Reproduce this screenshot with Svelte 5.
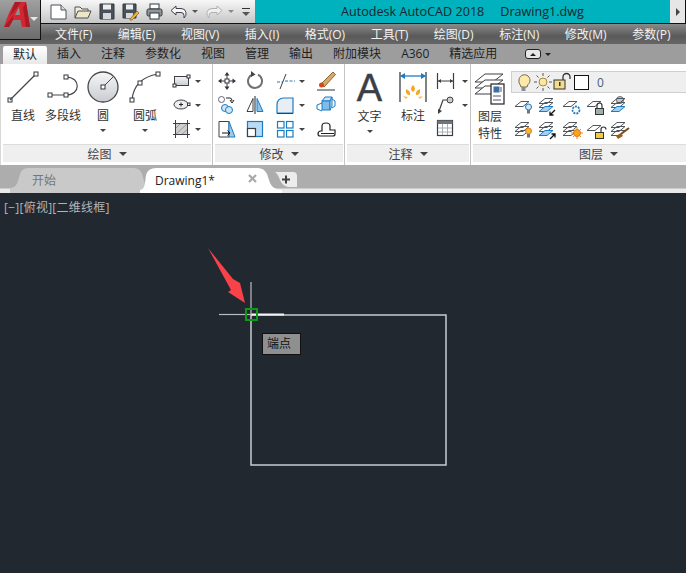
<script>
  const menus = ['文件(F)', '编辑(E)', '视图(V)', '插入(I)', '格式(O)', '工具(T)', '绘图(D)', '标注(N)', '修改(M)', '参数(P)'];
  const tabs = ['默认', '插入', '注释', '参数化', '视图', '管理', '输出', '附加模块', 'A360', '精选应用'];

  const ln = '#3c4046';
  const bl = '#1b7cc4';
  const sq = (x, y) => `<rect x="${x - 2}" y="${y - 2}" width="4" height="4" fill="#fff" stroke="#33373c"/>`;
  const sheet = (y, fill = 'none', c = '#50565c') => `<path d="M3 ${y + 5.5}L9 ${y + .5}H17L11 ${y + 5.5}Z" fill="${fill}" stroke="${c}"/>`;
  const stack = (fill = 'none') => sheet(4) + sheet(8) + sheet(12, fill, fill === 'none' ? '#50565c' : bl);
  const bulb = (c, s) => `<circle cx="16.500" cy="13" r="3" fill="${c}" stroke="${s}"/><rect x="15" y="16" width="3" height="3.500" fill="#6f757b"/>`;
  const lock = (c, open) => `<rect x="11.500" y="14.500" width="8" height="6" fill="${c}" stroke="#333"/><path d="M${open ? '17 14V11.500a2.500 2.500 0 0 1 5 0' : '13 14V11.500a2.500 2.500 0 0 1 5 0V14'}" fill="none" stroke="#333" stroke-width="1.200"/>`;
  const sunny = `<circle cx="17" cy="15" r="3.500" fill="#f7a51d" stroke="#e2711a"/><path d="M17 9v2M17 19v2M11 15h2M21 15h2M13 11l1.500 1.500M21 11l-1.500 1.500M13 19l1.500-1.500M21 19l-1.500-1.500" stroke="#e98a1c"/>`;

  const icons = {
    line: sq(5, 30) + `<path d="M5 30L31 4" stroke="#44484d" stroke-width="1.200"/>` + sq(31, 4),
    poly: `<path d="M5 25H21C36 25 36 7 21 7" fill="none" stroke="#44484d" stroke-width="1.200"/>` + sq(5, 25) + sq(21, 25) + sq(21, 7),
    circle: `<circle cx="18" cy="17" r="15" fill="url(#disc)" stroke="#44484d" stroke-width="1.300"/><path d="M18 17L28 7" stroke="#44484d"/>` + sq(18, 17),
    arc: `<path d="M5 30Q7 8 31 4" fill="none" stroke="#44484d" stroke-width="1.200"/>` + sq(5, 30) + sq(13, 13) + sq(31, 4),
    rect: `<rect x="7.500" y="7.500" width="14" height="9" fill="url(#disc)" stroke="${ln}"/><rect x="6" y="15" width="3" height="3" fill="#fff" stroke="#333"/><rect x="20" y="6" width="3" height="3" fill="#fff" stroke="#333"/>`,
    ellipse: `<ellipse cx="14" cy="11.500" rx="7" ry="4.500" fill="#eee" stroke="${ln}"/><path d="M14 9.500v4M12 11.500h4" stroke="#222"/><rect x="20.500" y="10" width="2.500" height="2.500" fill="#fff" stroke="#333"/>`,
    hatch: `<rect x="8" y="6" width="13" height="12" fill="#cfcfcf"/><path d="M8 12l6-6M8 18L21 6M14 18l7-6" stroke="#999"/><path d="M8.500 3v18M20.500 3v18M6 6.500h17M6 17.500h17" stroke="${ln}"/>`,
    move: `<path d="M12 5v14M5 12h14" stroke="#33373c"/><path d="M12 3l-2.500 3.500h5zM12 21l-2.500-3.500h5zM3 12l3.500-2.500v5zM21 12l-3.500-2.500v5z" fill="#33373c"/><rect x="10" y="10" width="4" height="4" fill="#fff" stroke="#33373c"/>`,
    rotate: `<path d="M9.500 5.500A7 7 0 1 0 15 5.700" fill="none" stroke="#6d7277" stroke-width="2"/><path d="M8 2l4.500 3.500L8 8z" fill="#444"/>`,
    trim: `<path d="M6 13h6M14 12h11" stroke="${bl}" stroke-dasharray="3 1.500"/><path d="M9 20L15 5" stroke="${ln}"/>`,
    erase: `<path d="M8 15L20 3l2.500 2.500L11 18z" fill="#d7a868" stroke="#8a6a3a"/><circle cx="8.500" cy="16" r="2.500" fill="#d9481c"/><path d="M4 21h18" stroke="#333"/>`,
    copy: `<circle cx="6.500" cy="6.500" r="3" fill="#fff" stroke="#667"/><circle cx="10" cy="15" r="3.500" fill="#cfe6f7" stroke="${bl}"/><circle cx="14" cy="17" r="3.500" fill="#cfe6f7" stroke="${bl}"/><path d="M11 5h4q2 0 2 3M15 7l2 3 2-3" fill="none" stroke="#222"/>`,
    mirror: `<path d="M12 3v18" stroke="#222"/><path d="M10 5.500v13H4z" fill="none" stroke="${ln}"/><path d="M14 5.500v13h6z" fill="#8cc4ea" stroke="${bl}"/>`,
    fillet: `<path d="M6 20V12Q6 5 13 5H22V20Z" fill="#e8eef3" stroke="${bl}" stroke-width="1.200"/><path d="M6 20.500H22" stroke="${ln}"/>`,
    shell: `<path d="M9 8l3-4h7l-2 4z" fill="#cfe6f7" stroke="${bl}"/><rect x="9" y="8" width="8" height="9" fill="#7fbde8" stroke="${bl}"/><path d="M17 8l2-4v9l-2 4z" fill="#cfe6f7" stroke="${bl}"/><path d="M9 10L4 12v4l5 2M19 6l3 2v5l-3 2" fill="none" stroke="${bl}"/>`,
    stretch: `<path d="M4 4.500H14V20H4Z" fill="#fff" stroke="${ln}"/><path d="M14 4.500l6 15.500H14z" fill="#9ccbee" stroke="${bl}"/><path d="M7 16h8M12.500 13.500L15 16l-2.500 2.500" fill="none" stroke="#111"/>`,
    scale: `<rect x="4.500" y="4.500" width="15" height="15" fill="#b9dcf4" stroke="${bl}" stroke-width="1.200"/><rect x="4.500" y="11.500" width="8" height="8" fill="#fff" stroke="${ln}" stroke-width="1.200"/>`,
    array: `<rect x="6.500" y="4.500" width="6.500" height="6.500" fill="#fff" stroke="${bl}" stroke-width="1.200"/><rect x="15.500" y="4.500" width="6.500" height="6.500" fill="#fff" stroke="${bl}" stroke-width="1.200"/><rect x="6.500" y="13.500" width="6.500" height="6.500" fill="#fff" stroke="${bl}" stroke-width="1.200"/><rect x="15.500" y="13.500" width="6.500" height="6.500" fill="#fff" stroke="${bl}" stroke-width="1.200"/>`,
    offset: `<path d="M5 17q0-3 3-3h1V9q0-3 4-3t4 3v4h5v4q0 2-2 2H7q-2 0-2-2z" fill="#fff" stroke="#222" stroke-width="1.200"/><path d="M8 16.500h13" stroke="#222"/>`,
    dim: `<path d="M1 2V32M27 2V32" stroke="${ln}" stroke-width="1.300"/><path d="M2 6H26" stroke="${bl}" stroke-width="1.300"/><path d="M1 6l5-3v6zM27 6l-5-3v6z" fill="${bl}"/><path d="M14 15q4 4 0 7q-4-3 0-7zM7 19q5 2 4 6q-5 0-4-6zM21 19q-5 2-4 6q5 0 4-6z" fill="#f5a623"/><path d="M4 26l5 1-2 2zM24 26l-5 1 2 2z" fill="#f5c15c"/>`,
    hdim: `<path d="M3.500 4V20M19.500 4V20" stroke="${ln}" stroke-width="1.200"/><path d="M3 12H20" stroke="${ln}"/><path d="M4 12l3-2v4zM19 12l-3-2v4z" fill="${ln}"/>`,
    leader: `<circle cx="16" cy="7" r="3" fill="#ccc" stroke="${ln}"/><path d="M13 7H9L5 18" fill="none" stroke="${ln}" stroke-width="1.200"/><path d="M4 21l0-5 4 2z" fill="${ln}"/>`,
    table: `<rect x="3.500" y="3.500" width="15" height="15" fill="#fff" stroke="${ln}" stroke-width="1.200"/><rect x="3.500" y="3.500" width="15" height="3.500" fill="#6f757c"/><path d="M4 11h14M4 15h14M8.500 7v11M13.500 7v11" stroke="#aab0b6"/>`,
    layers: `<path d="M3 12L13 4H31L21 12Z" fill="#fff" stroke="${ln}"/><path d="M3 18L13 10H31L21 18Z" fill="#fff" stroke="${ln}"/><path d="M3 24L13 16H31L21 24Z" fill="#fff" stroke="${ln}"/><rect x="19" y="14" width="13" height="20" fill="#fff" stroke="#222" stroke-width="1.200"/><rect x="21.500" y="16.500" width="6" height="6" fill="#3c6ea8"/><path d="M29 17v5M21 26h8M21 30h8" stroke="#556"/>`,
    bulbOn: `<path d="M5 8a5.500 5.500 0 1 1 9 4.500L13 15H7L6 12.500A5.500 5.500 0 0 1 5 8z" fill="#ffe9a8" stroke="#6e6a55"/><rect x="7.500" y="15" width="4" height="4" fill="#8a8f96"/>`,
    sunOn: `<circle cx="10" cy="10" r="4" fill="#fbe6a2" stroke="#a58a3c"/><path d="M10 1v3M10 16v3M1 10h3M16 10h3M3.500 3.500l2 2M16.500 3.500l-2 2M3.500 16.500l2-2M16.500 16.500l-2-2" stroke="#555"/>`,
    lockOn: `<rect x="1" y="8" width="11" height="9" fill="#f5dc8c" stroke="#333"/><rect x="6" y="10" width="1.500" height="4" fill="#333"/><path d="M10 8V5a3 3 0 0 1 7 0v2" fill="none" stroke="#333" stroke-width="1.300"/>`,
    l1: sheet(7) + bulb('#cfe6fb', bl),
    l2: stack('#a7d0ef') + `<path d="M19 16l-5 5M14 17.500V21h3.500" fill="none" stroke="#111" stroke-width="1.300"/>`,
    l3: sheet(7) + `<circle cx="16" cy="16" r="3.500" fill="#fff" stroke="${bl}" stroke-width="1.800" stroke-dasharray="2 1"/>`,
    l4: sheet(7) + lock('#9db0b0', false),
    l5: `<circle cx="12" cy="6" r="3.500" fill="#c5c9cd" stroke="#667"/>` + stack('#a7d0ef'),
    l6: stack() + bulb('#f7b733', '#e2811a'),
    l7: stack('#a7d0ef') + `<path d="M14 21l5-5M15.500 16H19v3.500" fill="none" stroke="#111" stroke-width="1.300"/>`,
    l8: stack() + sunny,
    l9: sheet(7) + lock('#f5c93c', true),
    l10: stack() + `<path d="M21 10L13 16" stroke="#7a4a1e" stroke-width="2"/><path d="M8 18l5-3 2 3-5 3z" fill="#9c5a1c"/>`
  };

  const modify = [
    ['move'], ['rotate'], ['trim', true], ['erase'],
    ['copy'], ['mirror'], ['fillet', true], ['shell'],
    ['stretch'], ['scale'], ['array', true], ['offset']
  ];
  const layerIcons = ['l1', 'l2', 'l3', 'l4', 'l5', 'l6', 'l7', 'l8', 'l9', 'l10'];
</script>

{#snippet icon(name, w, h)}
  <svg class="ic" width={w} height={h} viewBox="0 0 {w} {h}">{@html icons[name]}</svg>
{/snippet}

<svg class="defs" width="0" height="0">
  <defs>
    <linearGradient id="disc" x1="0" y1="0" x2="0" y2="1">
      <stop offset="0" stop-color="#f6f6f6" />
      <stop offset="1" stop-color="#c9ccd0" />
    </linearGradient>
  </defs>
</svg>

<div class="app">
  <header class="titlebar">
    <div class="quick">
      <svg width="17" height="18" viewBox="0 0 17 18"><path d="M1 2H11L16 7V16H1Z" fill="#fff" stroke="#4c5056" /><path d="M11 2V7H16" fill="#ddd" stroke="#4c5056" /></svg>
      <svg width="18" height="16" viewBox="0 0 18 16"><path d="M1 14V3H6L8 5H14V7" fill="#f1eee0" stroke="#4c5056" /><path d="M1 14L4 7H17L14 14Z" fill="#ece5c6" stroke="#4c5056" /></svg>
      <svg width="16" height="17" viewBox="0 0 16 17"><path d="M1 1H15V16H1Z" fill="#4a5158" stroke="#33383e" /><rect x="4" y="1.500" width="8" height="5" fill="#eceff2" /><rect x="4" y="10" width="8" height="6" fill="#d5d9dd" /></svg>
      <svg width="17" height="18" viewBox="0 0 17 18"><path d="M1 1H14V15H1Z" fill="#4a5158" stroke="#33383e" /><rect x="4" y="1.500" width="7" height="5" fill="#eceff2" /><rect x="4" y="10" width="7" height="5" fill="#d5d9dd" /><path d="M8 16L15 8l2 2-7 7H8Z" fill="#f3b63a" stroke="#8a5a10" stroke-width=".7" /></svg>
      <svg width="17" height="17" viewBox="0 0 17 17"><rect x="4" y="1" width="9" height="5" fill="#fff" stroke="#33383e" /><rect x="1" y="6" width="15" height="7" rx="1.500" fill="#8f959b" stroke="#33383e" /><rect x="4" y="10" width="9" height="6" fill="#fff" stroke="#33383e" /></svg>
      <svg class="undo" width="17" height="14" viewBox="0 0 17 14"><path d="M6 1L1 5.500 6 10V7.500H11Q14 7.500 14 10.500V13Q16.500 11 16 7.500 15.500 3.500 11 3.500H6Z" fill="#f6f6f6" stroke="#3e4248" /></svg>
      <i class="caret quick-caret"></i>
      <svg class="redo" width="17" height="14" viewBox="0 0 17 14"><path d="M11 1L16 5.500 11 10V7.500H6Q3 7.500 3 10.500V13Q.5 11 1 7.500 1.500 3.500 6 3.500H11Z" fill="#f0f0f0" stroke="#aeb1b4" /></svg>
      <i class="caret quick-caret light"></i>
      <span class="overflow"><i class="caret"></i></span>
    </div>
    <div class="title">
      <span>Autodesk AutoCAD 2018</span>
      <span>Drawing1.dwg</span>
    </div>
    <div class="more"><i class="arrow-right"></i></div>
  </header>

  <div class="logo">
    <svg width="31" height="30" viewBox="0 0 31 30">
      <path d="M4 27Q9 11 15 2H26L30 27H22L20.500 20H13L9 27ZM15 15H20L19 7Z" fill="#d42632" fill-rule="evenodd" />
      <path d="M15 2H21L16 9 10 16ZM4 27L13 16V20L9 27ZM26 2L30 27H26L23 8Z" fill="#a81a24" />
    </svg>
    <i class="caret logo-caret"></i>
  </div>

  <nav class="menubar">
    {#each menus as m}<span>{m}</span>{/each}
  </nav>

  <div class="ribbon-tabs">
    {#each tabs as t, i}<span class="rtab" class:active={i === 0}>{t}</span>{/each}
    <span class="mini"><span class="pill"><i></i></span><i class="caret dark"></i></span>
  </div>

  <section class="ribbon">
    <div class="panel draw">
      <div class="body">
        <div class="big">{@render icon('line', 36, 36)}<span>直线</span></div>
        <div class="big">{@render icon('poly', 36, 36)}<span>多段线</span></div>
        <div class="big">{@render icon('circle', 36, 36)}<span>圆</span><i class="caret small"></i></div>
        <div class="big wide">{@render icon('arc', 36, 36)}<span>圆弧</span><i class="caret small"></i></div>
        <div class="smalls">
          <div class="cell">{@render icon('rect', 24, 24)}<i class="caret small"></i></div>
          <div class="cell">{@render icon('ellipse', 24, 24)}<i class="caret small"></i></div>
          <div class="cell">{@render icon('hatch', 24, 24)}<i class="caret small"></i></div>
        </div>
      </div>
      <div class="foot">绘图<i class="caret dark"></i></div>
    </div>

    <div class="panel modify">
      <div class="body grid">
        {#each modify as [name, more]}
          <div class="cell">{@render icon(name, 24, 24)}{#if more}<i class="caret small"></i>{/if}</div>
        {/each}
      </div>
      <div class="foot">修改<i class="caret dark"></i></div>
    </div>

    <div class="panel notes">
      <div class="body">
        <div class="big text"><b class="bigA">A</b><span>文字</span><i class="caret small"></i></div>
        <div class="big dim">{@render icon('dim', 28, 36)}<span>标注</span></div>
        <div class="smalls">
          <div class="cell">{@render icon('hdim', 24, 24)}<i class="caret small"></i></div>
          <div class="cell">{@render icon('leader', 24, 24)}<i class="caret small"></i></div>
          <div class="cell">{@render icon('table', 24, 24)}</div>
        </div>
      </div>
      <div class="foot">注释<i class="caret dark"></i></div>
    </div>

    <div class="panel layers">
      <div class="body">
        <div class="big prop">{@render icon('layers', 36, 36)}<span>图层</span><span>特性</span></div>
        <div class="layer-side">
          <div class="combo">
            {@render icon('bulbOn', 19, 20)}
            {@render icon('sunOn', 20, 20)}
            {@render icon('lockOn', 18, 20)}
            <span class="swatch"></span>
            <span class="zero">0</span>
          </div>
          <div class="layer-grid">
            {#each layerIcons as name}{@render icon(name, 24, 24)}{/each}
          </div>
        </div>
      </div>
      <div class="foot">图层<i class="caret dark"></i></div>
    </div>
  </section>

  <div class="doc-tabs">
    <div class="dtab start">
      <svg width="140" height="26" viewBox="0 0 140 26"><path d="M0 21Q6 21 8 14L10 7Q12 1 18 1H124Q130 1 132 7L134 14Q136 21 140 21V26H0Z" fill="#c9c9c9" /></svg>
      <span>开始</span>
    </div>
    <div class="dtab current">
      <svg width="142" height="26" viewBox="0 0 142 26"><path d="M0 23Q4 23 5 16L6 8Q8 1 16 1H118Q124 1 127 7L130 16Q133 23 142 23V26H0Z" fill="#fff" /></svg>
      <span>Drawing1*</span>
      <svg class="close" width="9" height="9" viewBox="0 0 9 9"><path d="M1 1L8 8M8 1L1 8" stroke="#a9a9a9" stroke-width="2.200" /></svg>
    </div>
    <div class="plus">
      <svg width="22" height="15" viewBox="0 0 22 15"><path d="M0 0H18Q22 0 22 4V15H14Q8 15 5 8Q3 2 0 0Z" fill="#ececec" /><path d="M11 3.500V11.500M7 7.500H15" stroke="#3e4247" stroke-width="2" /></svg>
    </div>
  </div>

  <main class="canvas">
    <div class="vp">[−][俯视][二维线框]</div>
    <svg class="scene" width="686" height="380" viewBox="0 193 686 380">
      <path d="M251 315H446V465H251Z" fill="none" stroke="#c9cccf" stroke-width="1.500" />
      <path d="M219 314.500H251" stroke="#b9bcbf" stroke-width="1.200" />
      <path d="M251 314.500H284" stroke="#f4f4f4" stroke-width="2" />
      <path d="M251 282V315" stroke="#b9bcbf" stroke-width="1.200" />
      <rect x="246" y="309" width="11" height="11" fill="none" stroke="#0b9a12" stroke-width="2" />
      <path d="M208 248L233 279 240 283 245 303 228 292 231 290Z" fill="#f8424a" />
    </svg>
    <div class="tip">端点</div>
  </main>
</div>

<style>
  :global(body) {
    margin: 0;
    background: #212830;
  }

  .defs {
    position: absolute;
  }

  .app {
    position: relative;
    width: 686px;
    height: 573px;
    overflow: hidden;
    display: flex;
    flex-direction: column;
    font-family: "Open Sans", "Noto Sans CJK SC", sans-serif;
    font-size: 12px;
    color: #333;
  }

  svg {
    display: block;
    flex: none;
  }

  .caret {
    display: block;
    width: 0;
    height: 0;
    border-left: 4px solid transparent;
    border-right: 4px solid transparent;
    border-top: 4px solid #555;
  }

  .caret.small {
    border-left-width: 3px;
    border-right-width: 3px;
    border-top-width: 3px;
    border-top-color: #444;
  }

  .caret.dark {
    border-top-color: #444;
  }

  /* title bar */
  .titlebar {
    display: flex;
    height: 23px;
    border-bottom: 1px solid #111;
    flex: none;
  }

  .quick {
    width: 214px;
    margin-left: 41px;
    flex: none;
    display: flex;
    align-items: center;
    gap: 7px;
    padding-left: 9px;
    box-sizing: border-box;
    background: linear-gradient(#f7f7f7, #c6c6c6);
  }

  .quick-caret {
    border-left-width: 3px;
    border-right-width: 3px;
    border-top-width: 3px;
    margin: 0 1px 0 -2px;
  }

  .quick-caret.light {
    border-top-color: #8a8a8a;
  }

  .overflow {
    border-top: 1px solid #333;
    padding-top: 3px;
  }

  .title {
    flex: 1;
    display: flex;
    gap: 16px;
    padding-left: 86px;
    align-items: center;
    background: #00b2bd;
    color: #17262b;
    font-size: 12.600px;
    white-space: nowrap;
  }

  .more {
    width: 16px;
    display: flex;
    align-items: center;
    justify-content: center;
    background: #e6e6e6;
    border-right: 1px solid #111;
    box-sizing: border-box;
  }

  .arrow-right {
    width: 0;
    height: 0;
    border-top: 4px solid transparent;
    border-bottom: 4px solid transparent;
    border-left: 4px solid #444;
  }

  /* application button hangs over the menu bar */
  .logo {
    position: absolute;
    left: 0;
    top: 0;
    width: 41px;
    height: 40px;
    box-sizing: border-box;
    background: linear-gradient(#a0a0a0, #6c6c6c);
    border-right: 1px solid #111;
    border-bottom: 1px solid #111;
  }

  .logo-caret {
    position: absolute;
    left: 30px;
    top: 17px;
    border-top-color: #e6e6e6;
  }

  .menubar {
    height: 20px;
    flex: none;
    display: flex;
    align-items: center;
    gap: 25.500px;
    padding-left: 55px;
    background: linear-gradient(#8a8a8a, #5a5a5a 60%, #666);
    color: #f2f2f2;
    white-space: nowrap;
  }

  .ribbon-tabs {
    height: 20px;
    flex: none;
    display: flex;
    align-items: stretch;
    padding-left: 3px;
    background: #9d9d9d;
    color: #1f1f1f;
    white-space: nowrap;
  }

  .rtab {
    padding: 0 10px;
    line-height: 20px;
  }

  .rtab.active {
    background: linear-gradient(#fff, #e8e8e8);
    margin: 2px 0 0;
    line-height: 18px;
    border-radius: 2px 2px 0 0;
  }

  .mini {
    display: flex;
    align-items: center;
    gap: 4px;
    margin-left: 18px;
  }

  .pill {
    width: 14px;
    height: 8px;
    display: flex;
    align-items: center;
    justify-content: center;
    background: #e8e8e8;
    border: 1px solid #222;
    border-radius: 3px;
  }

  .pill i {
    width: 0;
    height: 0;
    border-left: 3px solid transparent;
    border-right: 3px solid transparent;
    border-bottom: 3px solid #222;
  }

  .mini .caret {
    border-left-width: 3px;
    border-right-width: 3px;
    border-top-width: 3px;
    border-top-color: #222;
  }

  /* ribbon */
  .ribbon {
    height: 101px;
    flex: none;
    display: flex;
    background: #fff;
  }

  .panel {
    display: flex;
    flex-direction: column;
    box-sizing: border-box;
    border-right: 1px solid #c4c4c4;
    padding-right: 1px;
  }

  .draw {
    width: 213px;
    border-left: 1px solid #d8d8d8;
  }

  .modify {
    width: 132px;
  }

  .notes {
    width: 126px;
  }

  .layers {
    flex: 1;
    border-right: 0;
    padding-right: 0;
  }

  .body {
    height: 80px;
    flex: none;
    display: flex;
  }

  .foot {
    height: 18px;
    margin: 0 0 0 2px;
    display: flex;
    align-items: center;
    justify-content: center;
    gap: 7px;
    background: #efefef;
    border-top: 1px solid #dcdcdc;
    box-sizing: border-box;
    color: #444;
  }

  .layers .foot {
    padding-left: 38px;
  }

  .big {
    width: 40px;
    display: flex;
    flex-direction: column;
    align-items: center;
    padding-top: 6px;
    box-sizing: border-box;
    line-height: 16px;
  }

  .big span {
    margin-top: 2px;
    white-space: nowrap;
  }

  .big .caret {
    margin-top: 5px;
  }

  .draw .body {
    padding-left: 2px;
  }

  .draw .wide {
    width: 44px;
  }

  .smalls {
    display: flex;
    flex-direction: column;
    padding-top: 5px;
  }

  .cell {
    height: 24px;
    display: flex;
    align-items: center;
    gap: 4px;
  }

  .grid {
    display: grid;
    grid-template-columns: 28px 28px 42px 33px;
    grid-auto-rows: 24px;
    padding-top: 5px;
    padding-left: 2px;
    box-sizing: border-box;
  }

  .notes .body {
    padding-left: 2px;
  }

  .notes .text {
    width: 45px;
    padding-top: 0;
  }

  .notes .dim {
    width: 42px;
  }

  .bigA {
    height: 43px;
    font-family: "Liberation Sans", sans-serif;
    font-weight: 400;
    font-size: 38px;
    line-height: 48px;
    color: #3a3f45;
    -webkit-text-stroke: .5px #3a3f45;
  }

  .prop {
    width: 38px;
    line-height: 17px;
  }

  .prop span + span {
    margin-top: 0;
  }

  .layer-side {
    flex: 1;
    padding: 7px 0 0 2px;
  }

  .combo {
    height: 22px;
    display: flex;
    align-items: center;
    padding-left: 2px;
    background: #efefef;
    border: 1px solid #cfcfcf;
    border-right: 0;
    box-sizing: border-box;
  }

  .swatch {
    width: 13px;
    height: 13px;
    margin-left: 3px;
    background: #fff;
    border: 1px solid #111;
  }

  .zero {
    margin-left: 8px;
    color: #44607a;
  }

  .layer-grid {
    display: grid;
    grid-template-columns: repeat(5, 24px);
    margin-left: 1px;
    padding-top: 1px;
  }

  /* document tabs */
  .doc-tabs {
    height: 28px;
    flex: none;
    display: flex;
    align-items: flex-start;
    padding-left: 10px;
    box-sizing: border-box;
    background: linear-gradient(#adadad 23px, #e9e9e9 24px);
  }

  .dtab {
    position: relative;
    height: 26px;
    margin-top: 2px;
    display: flex;
    align-items: center;
  }

  .dtab svg:first-child {
    position: absolute;
    left: 0;
    top: 0;
  }

  .dtab span {
    position: relative;
    white-space: nowrap;
  }

  .start {
    width: 130px;
    color: #777;
  }

  .start span {
    left: 22px;
  }

  .current {
    width: 135px;
    color: #222;
  }

  .current span {
    left: 15px;
  }

  .close {
    position: absolute;
    left: 108px;
    top: 7px;
  }

  .plus {
    margin-top: 7px;
  }

  /* drawing area */
  .canvas {
    position: relative;
    flex: 1;
    background: #212830;
  }

  .vp {
    position: absolute;
    left: 4px;
    top: 5px;
    color: #b2b5b8;
    white-space: nowrap;
    letter-spacing: .25px;
  }

  .scene {
    position: absolute;
    left: 0;
    top: 0;
  }

  .tip {
    position: absolute;
    left: 262px;
    top: 140px;
    width: 39px;
    height: 22px;
    box-sizing: border-box;
    padding-left: 4px;
    line-height: 20px;
    background: #8f8f8f;
    border: 1px solid #111;
    color: #111;
  }
</style>
